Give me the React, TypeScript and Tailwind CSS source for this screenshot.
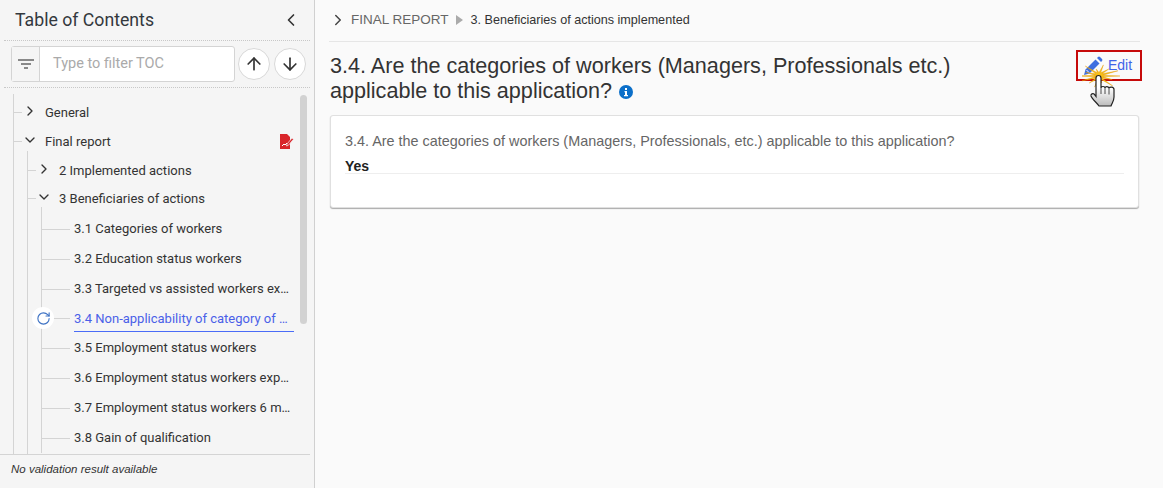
import { ArrowDown, ArrowUp, ChevronDown, ChevronLeft, ChevronRight, RotateCw } from 'lucide-react';

// spiky burst behind the click cursor, wider than it is tall
const burst = Array.from({ length: 28 }, (_, i) => {
  const a = (i * Math.PI) / 14;
  const long = [1, 0.7, 1.05, 0.6, 0.95, 0.75, 1][(i / 2) % 7 | 0];
  const rx = i % 2 ? 4 : 21 * long;
  const ry = i % 2 ? 3.5 : 12 * long;
  return `${(17 + rx * Math.cos(a)).toFixed(1)},${(12 + ry * Math.sin(a)).toFixed(1)}`;
}).join(' ');

function Connector({ w }: { w: string }) {
  return <span className={`h-px shrink-0 bg-[#d4d4d4] ${w}`} />;
}

function Leaf({ label, active }: { label: string; active?: boolean }) {
  return (
    <li className={`relative flex items-center last:-mb-[15px] ${active ? 'h-[29px]' : 'h-[30px]'}`}>
      <Connector w="w-7" />
      {active ? (
        <>
          <span className="absolute -left-[10px] top-[3px] flex h-[22px] w-[22px] items-center justify-center rounded-full bg-white">
            <RotateCw className="h-[15px] w-[15px] text-[#3f73c4]" strokeWidth={1.8} />
          </span>
          <span className="absolute left-8 top-[5px] w-[220px] truncate border-b border-[#4a6cf7] pb-[2px] pr-[3px] text-[#4a5fe8]">{label}</span>
        </>
      ) : (
        <span className="ml-1 w-[220px] truncate pr-[3px]">{label}</span>
      )}
    </li>
  );
}

function App() {
  return (
    <div className="flex h-[488px] w-[1163px] overflow-hidden bg-[#fafafa] font-['Roboto',sans-serif] text-[13px] text-[#333]">
      {/* Sidebar */}
      <aside className="flex w-[315px] shrink-0 flex-col border-r border-[#d0d0d0] bg-[#f5f5f5]">
        <div className="mx-1 flex h-[41px] items-center justify-between border-b border-dotted border-[#c8c8c8] pl-[11px] pr-[9px]">
          <h2 className="text-[17.7px] text-[#33383d]">Table of Contents</h2>
          <ChevronLeft className="h-5 w-5 text-[#333]" strokeWidth={2} />
        </div>
        <div className="mx-1 flex h-[47px] items-center border-b border-dotted border-[#c8c8c8] pl-[7px]">
          <div className="flex h-9 w-[224px] rounded-[3px] border border-[#d4d4d4] bg-white">
            <div className="flex w-7 items-center justify-center border-r border-[#d4d4d4] bg-[#f5f5f5]">
              <svg width="16" height="10" viewBox="0 0 16 10" className="text-[#666]">
                <path d="M0 1h16M3 5h10M6 9h4" stroke="currentColor" strokeWidth="1.5" />
              </svg>
            </div>
            <span className="pl-[13px] pt-[7px] text-[14.5px] leading-5 text-[#aaa]">Type to filter TOC</span>
          </div>
          <button className="ml-[3px] flex h-8 w-8 items-center justify-center rounded-full border border-[#d8d8d8] bg-white">
            <ArrowUp className="h-5 w-5 text-[#333]" strokeWidth={2} />
          </button>
          <button className="ml-[4px] flex h-8 w-8 items-center justify-center rounded-full border border-[#d8d8d8] bg-white">
            <ArrowDown className="h-5 w-5 text-[#333]" strokeWidth={2} />
          </button>
        </div>

        <div className="relative mt-[6px] h-[361px] w-[310px] overflow-hidden border-b border-[#d4d4d4]">
          <div className="absolute left-[300px] top-[1px] h-[229px] w-[7px] rounded-full bg-[#d2d2d2]" />
          <ul className="ml-[13px] h-[400px] border-l border-[#d4d4d4] pt-1">
            <li className="flex h-[29px] items-center">
              <Connector w="w-[8px]" />
              <ChevronRight className="-mt-1 h-4 w-4 text-[#333]" strokeWidth={2} />
              <span className="ml-[7px]">General</span>
            </li>
            <li>
              <div className="flex h-[29px] items-center pr-4">
                <Connector w="w-[8px]" />
                <ChevronDown className="-mt-1 h-4 w-4 text-[#333]" strokeWidth={2} />
                <span className="ml-[7px]">Final report</span>
                <svg width="15" height="15" viewBox="0 0 15 15" className="ml-auto">
                  <path d="M1 0h7l3 3v12H1z" fill="#d9262b" />
                  <path d="M3 12l2-2 1 1 2-2" stroke="#fff" strokeWidth="1" fill="none" />
                  <path d="M8 10l5-6 1.500 1.200-5 6-2 .8z" fill="#d9262b" stroke="#f5f5f5" strokeWidth=".7" />
                </svg>
              </div>
              <ul className="ml-[13px] -mt-[5px] h-[360px] border-l border-[#d4d4d4] pt-[5px]">
                <li className="flex h-[29px] items-center">
                  <Connector w="w-[8px]" />
                  <ChevronRight className="-mt-1 h-4 w-4 text-[#333]" strokeWidth={2} />
                  <span className="ml-[7px]">2 Implemented actions</span>
                </li>
                <li>
                  <div className="flex h-[27px] items-center">
                    <Connector w="w-[8px]" />
                    <ChevronDown className="-mt-1 h-4 w-4 text-[#333]" strokeWidth={2} />
                    <span className="ml-[7px]">3 Beneficiaries of actions</span>
                  </div>
                  <ul className="ml-[13px] -mt-[5px] border-l border-[#d4d4d4] pt-[7px]">
                    <Leaf label="3.1 Categories of workers" />
                    <Leaf label="3.2 Education status workers" />
                    <Leaf label="3.3 Targeted vs assisted workers expected" />
                    <Leaf label="3.4 Non-applicability of category of workers" active />
                    <Leaf label="3.5 Employment status workers" />
                    <Leaf label="3.6 Employment status workers expected" />
                    <Leaf label="3.7 Employment status workers 6 months" />
                    <Leaf label="3.8 Gain of qualification" />
                  </ul>
                </li>
              </ul>
            </li>
          </ul>
        </div>
        <p className="pl-[11px] pt-[6px] font-['Liberation_Sans',sans-serif] text-[11.5px] italic text-[#333]">No validation result available</p>
      </aside>

      {/* Main */}
      <main className="flex-1 pl-[14px] pr-[23px]">
        <div className="flex h-[42px] items-center border-b border-[#e6e6e6] pb-[1px] font-['Liberation_Sans',sans-serif] text-[12.6px]">
          <ChevronRight className="mr-1 h-[18px] w-[18px] text-[#444]" strokeWidth={2} />
          <span className="text-[13.5px] text-[#666]">FINAL REPORT</span>
          <svg width="7" height="10" viewBox="0 0 7 10" className="ml-[7px] mr-2">
            <path d="M0 0l7 5-7 5z" fill="#aaa" />
          </svg>
          <span className="text-[#333]">3. Beneficiaries of actions implemented</span>
        </div>
        <div className="flex items-start justify-between">
          <h1 className="ml-px mt-[11px] w-[660px] font-['Liberation_Sans',sans-serif] text-[21.6px] leading-[25px] text-[#333]">
            3.4. Are the categories of workers (Managers, Professionals etc.) applicable to this application?
            <svg width="14" height="14" viewBox="0 0 14 14" className="ml-[7px] inline-block align-[-1px]">
              <circle cx="7" cy="7" r="7" fill="#0b6fc9" />
              <path d="M6 3h2v2H6zM5.500 6h2.500v4h1v1.200H5V10h1V7.200h-.5z" fill="#fff" />
            </svg>
          </h1>
          <div className="relative mt-2 mr-[-2px]">
            <div className="flex h-[31px] w-[66px] items-center border-2 border-[#c60a0a] pl-[5px]">
              <svg width="20" height="20" viewBox="0 0 20 20">
                <path d="M1 19l1.500-5.500L12.500 3.500l4 4L6.500 17.500z" fill="#3f6fe0" />
                <path d="M3.500 14l2.500 2.500" stroke="#fff" strokeWidth="1" />
                <path d="M14 2l1-1a1.500 1.500 0 0 1 2 0l2 2a1.500 1.500 0 0 1 0 2l-1 1z" fill="#3f6fe0" />
              </svg>
              <span className="ml-[5px] font-['Liberation_Sans',sans-serif] text-[14px] text-[#3f63e8]">Edit</span>
            </div>
            <svg width="40" height="45" viewBox="0 0 40 45" className="absolute left-[6px] top-[14px]">
              <defs>
                <linearGradient id="hand" x1="0" y1="0" x2="0" y2="1">
                  <stop offset="0.4" stopColor="#fff" />
                  <stop offset="1" stopColor="#bbb" />
                </linearGradient>
              </defs>
              <polygon points={burst} fill="#f7bd16" stroke="#e29b08" strokeWidth=".4" />
              <path d="M14 14a2.500 2.500 0 0 1 5 0V24c0-2 4-2 4 0c0-2 4-2 4 .5c0-2 5-2 5 1V33c0 4-2 6-3 9H17c-2-3-7-7-8-10c-.5-2 2-3 3-2l2 2.500z" fill="url(#hand)" stroke="#222" strokeWidth="1.200" />
              <path d="M19 24v6M23 24v6M27 24.500v6" stroke="#222" strokeWidth=".8" />
            </svg>
          </div>
        </div>
        <section className="mt-[12px] ml-px h-[93px] w-[809px] rounded-[3px] border border-[#e0e0e0] bg-white px-[14px] pt-4 shadow-[0_1px_1px_#aaa]">
          <p className="font-['Liberation_Sans',sans-serif] text-[14.4px] leading-[18px] text-[#666]">
            3.4. Are the categories of workers (Managers, Professionals, etc.) applicable to this application?
          </p>
          <p className="mt-[9px] border-b border-[#eee] font-['Liberation_Sans',sans-serif] text-[14px] font-bold leading-[14px] text-[#222]">Yes</p>
        </section>
      </main>
    </div>
  );
}

export default App;
